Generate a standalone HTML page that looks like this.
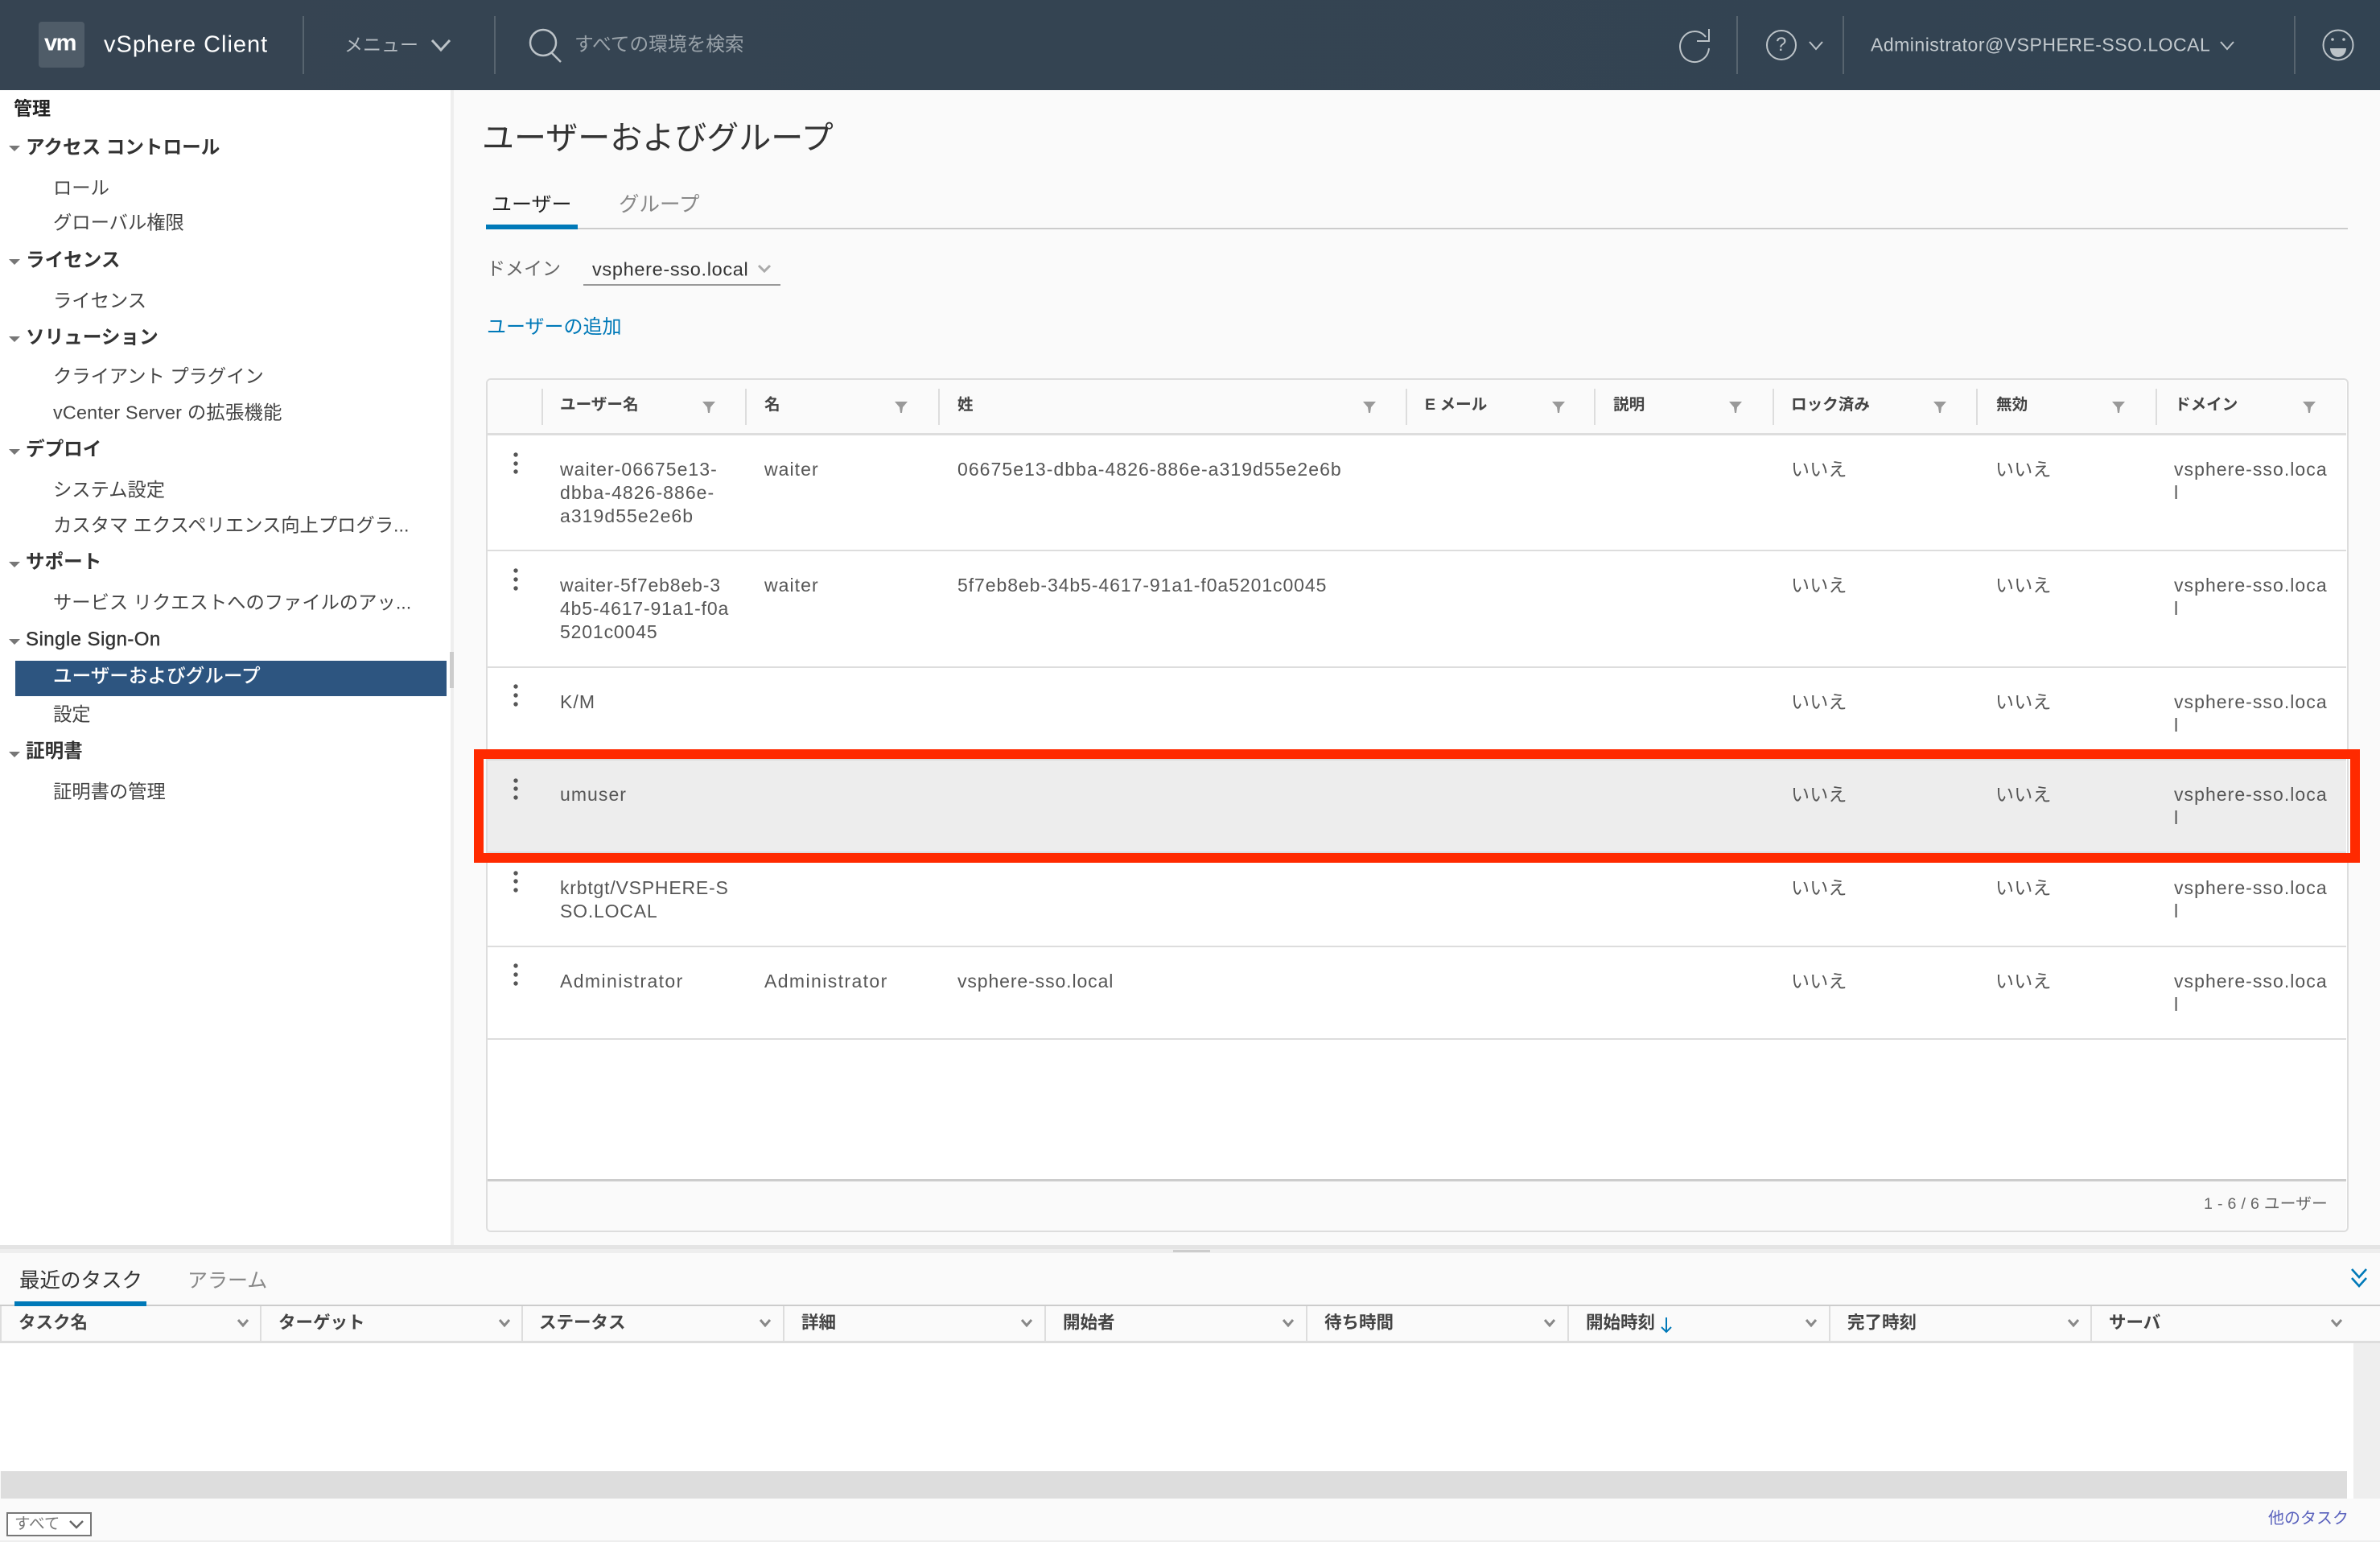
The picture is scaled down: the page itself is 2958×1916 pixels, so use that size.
<!DOCTYPE html>
<html lang="ja"><head><meta charset="utf-8"><title>ユーザーおよびグループ</title>
<style>
html,body{margin:0;padding:0;width:2958px;height:1916px;overflow:hidden;background:#fafafa}
body{position:relative;font-family:"Liberation Sans","Noto Sans CJK JP",sans-serif;color:#565656}
.b{position:absolute}
.t{position:absolute;white-space:nowrap;line-height:1;transform:translateY(-50%);font-size:24px}
.sec{left:32px;color:#333;font-weight:700;font-size:23.6px}
.it{left:66px;color:#444;font-size:23.3px}
.c{position:absolute;white-space:nowrap;font-size:23px;line-height:29px;letter-spacing:1.05px;color:#565656}
.th{color:#444;font-weight:700;font-size:19.6px}
.bh{color:#444;font-weight:700;font-size:21.5px}
.v{position:absolute;width:2px;background:#ddd}
svg{position:absolute;overflow:visible}
</style></head><body>

<!-- header -->
<div class="b" style="left:0;top:0;width:2958px;height:112px;background:linear-gradient(90deg,#364452,#324352)"></div>
<div class="b" style="left:48px;top:27px;width:57px;height:57px;border-radius:4px;background:#4f5c68"></div>
<div class="t" style="left:55px;top:54px;color:#fff;font-weight:700;font-size:29px;letter-spacing:-1.5px">vm</div>
<div class="t" style="left:129px;top:56px;color:#fff;font-size:29px;letter-spacing:1px">vSphere Client</div>
<div class="b" style="left:376px;top:20px;width:2px;height:72px;background:#57646f"></div>
<div class="b" style="left:614px;top:20px;width:2px;height:72px;background:#57646f"></div>
<div class="t" style="left:428px;top:56px;color:#b4bbc1;font-size:23px">メニュー</div>
<svg style="left:0;top:0" width="2958" height="112" fill="none" stroke="#bcc3c8" stroke-width="3">
<path d="M537 50l11 12 11-12"/>
<circle cx="675" cy="53" r="16" stroke-width="2.5"/><path d="M686 66l11 11" stroke-width="2.5"/>
<path d="M2120 46a18 19 0 1 0 4 14M2124 36v15h-15" stroke-width="2"/>
<circle cx="2214" cy="56" r="18" stroke-width="2"/>
<path d="M2249 52l8 9 8-9M2760 52l8 9 8-9" stroke-width="2"/>
<circle cx="2906" cy="56" r="18.5" stroke-width="2"/>
<circle cx="2899" cy="49" r="1.8" fill="#bcc3c8" stroke="none"/><circle cx="2913" cy="49" r="1.8" fill="#bcc3c8" stroke="none"/>
<path d="M2896 60h20a10 11 0 0 1-20 0z" fill="#bcc3c8" stroke="none"/>
</svg>
<div class="t" style="left:2207px;top:56px;color:#bcc3c8;font-size:24px">?</div>
<div class="t" style="left:714px;top:57px;color:#9aa3aa;font-size:23.7px">すべての環境を検索</div>
<div class="b" style="left:2158px;top:20px;width:2px;height:72px;background:#57646f"></div>
<div class="b" style="left:2290px;top:20px;width:2px;height:72px;background:#57646f"></div>
<div class="b" style="left:2851px;top:20px;width:2px;height:72px;background:#57646f"></div>
<div class="t" style="left:2325px;top:56px;color:#c3cacf;font-size:23px;letter-spacing:.5px">Administrator@VSPHERE-SSO.LOCAL</div>

<!-- sidebar -->
<div class="b" style="left:0;top:112px;width:560px;height:1435px;background:#fff"></div>
<div class="b" style="left:560px;top:112px;width:4px;height:1435px;background:#eee"></div>
<div class="b" style="left:559px;top:810px;width:5px;height:45px;background:#ccc"></div>
<div class="b" style="left:19px;top:821px;width:536px;height:44px;background:#2d5580"></div>
<svg style="left:0;top:0" width="40" height="1000" fill="#777">
<path d="M11 181h14l-7 7zM11 322h14l-7 7zM11 418h14l-7 7zM11 558h14l-7 7zM11 698h14l-7 7zM11 794h14l-7 7zM11 934h14l-7 7z"/>
</svg>
<div class="t" style="left:17px;top:135px;font-weight:700;color:#222;font-size:23px">管理</div>
<div class="t sec" style="top:185px">アクセス コントロール</div>
<div class="t it" style="top:234px">ロール</div>
<div class="t it" style="top:277px">グローバル権限</div>
<div class="t sec" style="top:325px">ライセンス</div>
<div class="t it" style="top:374px">ライセンス</div>
<div class="t sec" style="top:421px">ソリューション</div>
<div class="t it" style="top:468px">クライアント プラグイン</div>
<div class="t it" style="top:513px;letter-spacing:.25px">vCenter Server の拡張機能</div>
<div class="t sec" style="top:560px">デプロイ</div>
<div class="t it" style="top:609px">システム設定</div>
<div class="t it" style="top:653px">カスタマ エクスペリエンス向上プログラ...</div>
<div class="t sec" style="top:700px">サポート</div>
<div class="t it" style="top:749px">サービス リクエストへのファイルのアッ...</div>
<div class="t sec" style="top:795px;font-weight:400;font-size:24px;letter-spacing:.45px;-webkit-text-stroke:.4px #333">Single Sign-On</div>
<div class="t it" style="top:842px;color:#fff;font-size:23.6px;font-weight:500">ユーザーおよびグループ</div>
<div class="t it" style="top:888px">設定</div>
<div class="t sec" style="top:935px">証明書</div>
<div class="t it" style="top:984px">証明書の管理</div>

<!-- content -->
<div class="t" style="left:599px;top:172px;font-size:40px;color:#333">ユーザーおよびグループ</div>
<div class="t" style="left:611px;top:255px;font-size:25px;color:#222">ユーザー</div>
<div class="t" style="left:769px;top:255px;font-size:25.5px;color:#888">グループ</div>
<div class="b" style="left:604px;top:283px;width:2314px;height:2px;background:#ccc"></div>
<div class="b" style="left:604px;top:279px;width:114px;height:6px;background:#0079b8"></div>
<div class="t" style="left:605px;top:334px;color:#666;font-size:23px">ドメイン</div>
<div class="t" style="left:736px;top:335px;color:#333;font-size:23.5px;letter-spacing:.68px">vsphere-sso.local</div>
<svg style="left:0;top:0" width="1000" height="400" fill="none" stroke="#aaa" stroke-width="3"><path d="M943 330l7 7 7-7"/></svg>
<div class="b" style="left:725px;top:353px;width:245px;height:2px;background:#999"></div>
<div class="t" style="left:605px;top:407px;color:#0079b8;font-size:24px">ユーザーの追加</div>

<!-- table -->
<div class="b" style="left:604px;top:470px;width:2311px;height:1057px;border:2px solid #ddd;border-radius:6px;background:#fff"></div>
<div class="b" style="left:606px;top:472px;width:2310px;height:66px;background:#fafafa;border-radius:6px 6px 0 0"></div>
<div class="b" style="left:606px;top:538px;width:2310px;height:3px;background:#ddd"></div>
<div class="v" style="left:673px;top:483px;height:45px"></div>
<div class="v" style="left:926px;top:483px;height:45px"></div>
<div class="v" style="left:1166px;top:483px;height:45px"></div>
<div class="v" style="left:1747px;top:483px;height:45px"></div>
<div class="v" style="left:1981px;top:483px;height:45px"></div>
<div class="v" style="left:2203px;top:483px;height:45px"></div>
<div class="v" style="left:2456px;top:483px;height:45px"></div>
<div class="v" style="left:2679px;top:483px;height:45px"></div>
<div class="t th" style="left:696px;top:504px">ユーザー名</div>
<div class="t th" style="left:950px;top:504px">名</div>
<div class="t th" style="left:1190px;top:504px">姓</div>
<div class="t th" style="left:1771px;top:504px">E メール</div>
<div class="t th" style="left:2005px;top:504px">説明</div>
<div class="t th" style="left:2226px;top:504px">ロック済み</div>
<div class="t th" style="left:2481px;top:504px">無効</div>
<div class="t th" style="left:2703px;top:504px">ドメイン</div>
<svg style="left:0;top:0" width="2958" height="600" fill="#999">
<path d="M873 499h16l-6 7-1 7h-2l-1-7zM1112 499h16l-6 7-1 7h-2l-1-7zM1694 499h16l-6 7-1 7h-2l-1-7zM1929 499h16l-6 7-1 7h-2l-1-7zM2149 499h16l-6 7-1 7h-2l-1-7zM2403 499h16l-6 7-1 7h-2l-1-7zM2625 499h16l-6 7-1 7h-2l-1-7zM2862 499h16l-6 7-1 7h-2l-1-7z"/>
</svg>

<!-- row lines -->
<div class="b" style="left:606px;top:683px;width:2310px;height:2px;background:#ddd"></div>
<div class="b" style="left:606px;top:828px;width:2310px;height:2px;background:#ddd"></div>
<div class="b" style="left:606px;top:943px;width:2310px;height:117px;background:#ededed;border-top:2px solid #ddd;border-bottom:2px solid #ddd;box-sizing:border-box"></div>
<div class="b" style="left:606px;top:1175px;width:2310px;height:2px;background:#ddd"></div>
<div class="b" style="left:606px;top:1290px;width:2310px;height:2px;background:#ddd"></div>
<div class="b" style="left:606px;top:1465px;width:2310px;height:64px;background:#fafafa;border-top:3px solid #ccc;box-sizing:border-box;border-radius:0 0 5px 5px"></div>
<div class="t" style="left:2739px;top:1497px;font-size:19.6px;color:#666;letter-spacing:.3px">1 - 6 / 6 ユーザー</div>

<svg style="left:0;top:0" width="700" height="1300" fill="#565656">
<circle cx="641" cy="565" r="2.7"/><circle cx="641" cy="576" r="2.7"/><circle cx="641" cy="586" r="2.7"/>
<circle cx="641" cy="709" r="2.7"/><circle cx="641" cy="720" r="2.7"/><circle cx="641" cy="731" r="2.7"/>
<circle cx="641" cy="853" r="2.7"/><circle cx="641" cy="864" r="2.7"/><circle cx="641" cy="875" r="2.7"/>
<circle cx="641" cy="970" r="2.7"/><circle cx="641" cy="980" r="2.7"/><circle cx="641" cy="991" r="2.7"/>
<circle cx="641" cy="1085" r="2.7"/><circle cx="641" cy="1095" r="2.7"/><circle cx="641" cy="1106" r="2.7"/>
<circle cx="641" cy="1200" r="2.7"/><circle cx="641" cy="1211" r="2.7"/><circle cx="641" cy="1222" r="2.7"/>
</svg>

<!-- row 1 -->
<div class="c" style="left:696px;top:569px">waiter-06675e13-<br>dbba-4826-886e-<br>a319d55e2e6b</div>
<div class="c" style="left:950px;top:569px">waiter</div>
<div class="c" style="left:1190px;top:569px">06675e13-dbba-4826-886e-a319d55e2e6b</div>
<div class="c" style="left:2226px;top:569px;letter-spacing:.2px">いいえ</div>
<div class="c" style="left:2480px;top:569px;letter-spacing:.2px">いいえ</div>
<div class="c" style="left:2702px;top:569px">vsphere-sso.loca<br>l</div>
<!-- row 2 -->
<div class="c" style="left:696px;top:713px;letter-spacing:.85px">waiter-5f7eb8eb-3<br>4b5-4617-91a1-f0a<br>5201c0045</div>
<div class="c" style="left:950px;top:713px">waiter</div>
<div class="c" style="left:1190px;top:713px;letter-spacing:.93px">5f7eb8eb-34b5-4617-91a1-f0a5201c0045</div>
<div class="c" style="left:2226px;top:713px;letter-spacing:.2px">いいえ</div>
<div class="c" style="left:2480px;top:713px;letter-spacing:.2px">いいえ</div>
<div class="c" style="left:2702px;top:713px">vsphere-sso.loca<br>l</div>
<!-- row 3 -->
<div class="c" style="left:696px;top:858px">K/M</div>
<div class="c" style="left:2226px;top:858px;letter-spacing:.2px">いいえ</div>
<div class="c" style="left:2480px;top:858px;letter-spacing:.2px">いいえ</div>
<div class="c" style="left:2702px;top:858px">vsphere-sso.loca<br>l</div>
<!-- row 4 -->
<div class="c" style="left:696px;top:973px">umuser</div>
<div class="c" style="left:2226px;top:973px;letter-spacing:.2px">いいえ</div>
<div class="c" style="left:2480px;top:973px;letter-spacing:.2px">いいえ</div>
<div class="c" style="left:2702px;top:973px">vsphere-sso.loca<br>l</div>
<!-- row 5 -->
<div class="c" style="left:696px;top:1089px;letter-spacing:.8px">krbtgt/VSPHERE-S<br>SO.LOCAL</div>
<div class="c" style="left:2226px;top:1089px;letter-spacing:.2px">いいえ</div>
<div class="c" style="left:2480px;top:1089px;letter-spacing:.2px">いいえ</div>
<div class="c" style="left:2702px;top:1089px">vsphere-sso.loca<br>l</div>
<!-- row 6 -->
<div class="c" style="left:696px;top:1205px;letter-spacing:1.4px">Administrator</div>
<div class="c" style="left:950px;top:1205px;letter-spacing:1.4px">Administrator</div>
<div class="c" style="left:1190px;top:1205px;letter-spacing:.9px">vsphere-sso.local</div>
<div class="c" style="left:2226px;top:1205px;letter-spacing:.2px">いいえ</div>
<div class="c" style="left:2480px;top:1205px;letter-spacing:.2px">いいえ</div>
<div class="c" style="left:2702px;top:1205px">vsphere-sso.loca<br>l</div>

<!-- red highlight -->
<div class="b" style="left:589px;top:931px;width:2344px;height:141px;border:12px solid #ff2a00;box-sizing:border-box"></div>

<!-- bottom panel -->
<div class="b" style="left:0;top:1547px;width:2958px;height:5px;background:#e4e4e4"></div>
<div class="b" style="left:0;top:1552px;width:2958px;height:5px;background:#eee"></div>
<div class="b" style="left:1458px;top:1553px;width:46px;height:3px;background:#ccc"></div>
<div class="t" style="left:24px;top:1592px;font-size:25.5px;color:#333">最近のタスク</div>
<div class="t" style="left:233px;top:1592px;font-size:25px;color:#888">アラーム</div>
<div class="b" style="left:0;top:1621px;width:2958px;height:2px;background:#ccc"></div>
<div class="b" style="left:18px;top:1617px;width:164px;height:6px;background:#0079b8"></div>
<div class="b" style="left:0;top:1623px;width:2958px;height:43px;background:#fafafa"></div>
<div class="b" style="left:0;top:1666px;width:2958px;height:3px;background:#ddd"></div>
<div class="b" style="left:0;top:1669px;width:2917px;height:159px;background:#fff"></div>
<div class="b" style="left:2917px;top:1669px;width:8px;height:193px;background:#fff"></div>
<div class="b" style="left:2925px;top:1669px;width:33px;height:193px;background:#eee"></div>
<div class="b" style="left:1px;top:1828px;width:2916px;height:34px;background:#ddd"></div>
<div class="v" style="left:0;top:1623px;height:43px"></div>
<div class="v" style="left:323px;top:1623px;height:43px"></div>
<div class="v" style="left:648px;top:1623px;height:43px"></div>
<div class="v" style="left:973px;top:1623px;height:43px"></div>
<div class="v" style="left:1298px;top:1623px;height:43px"></div>
<div class="v" style="left:1623px;top:1623px;height:43px"></div>
<div class="v" style="left:1948px;top:1623px;height:43px"></div>
<div class="v" style="left:2273px;top:1623px;height:43px"></div>
<div class="v" style="left:2598px;top:1623px;height:43px"></div>
<div class="t bh" style="left:23px;top:1644px">タスク名</div>
<div class="t bh" style="left:346px;top:1644px">ターゲット</div>
<div class="t bh" style="left:670px;top:1644px">ステータス</div>
<div class="t bh" style="left:996px;top:1644px">詳細</div>
<div class="t bh" style="left:1321px;top:1644px">開始者</div>
<div class="t bh" style="left:1646px;top:1644px">待ち時間</div>
<div class="t bh" style="left:1971px;top:1644px">開始時刻</div>
<div class="t bh" style="left:2296px;top:1644px">完了時刻</div>
<div class="t bh" style="left:2621px;top:1644px">サーバ</div>
<svg style="left:0;top:0" width="2958" height="1916" fill="none" stroke="#888" stroke-width="3">
<path d="M296 1640l6 7 6-7M621 1640l6 7 6-7M945 1640l6 7 6-7M1270 1640l6 7 6-7M1595 1640l6 7 6-7M1920 1640l6 7 6-7M2245 1640l6 7 6-7M2571 1640l6 7 6-7M2898 1640l6 7 6-7"/>
<path d="M2071 1637v18M2065 1649l6 6 6-6" stroke="#0079b8" stroke-width="2"/>
<path d="M2923 1577l9 10 9-10M2923 1588l9 10 9-10" stroke="#0079b8" stroke-width="2.6"/>
</svg>
<div class="b" style="left:8px;top:1879px;width:106px;height:30px;border:2px solid #777;box-sizing:border-box;background:#fff"></div>
<div class="t" style="left:18px;top:1894px;font-size:19.5px;color:#777">すべて</div>
<svg style="left:0;top:0" width="120" height="1916" fill="none" stroke="#666" stroke-width="2.4"><path d="M87 1890l8 8 8-8"/></svg>
<div class="t" style="left:2819px;top:1887px;font-size:20px;color:#5a62bd">他のタスク</div>
<div class="b" style="left:0;top:1914px;width:2958px;height:2px;background:#eee"></div>
</body></html>
